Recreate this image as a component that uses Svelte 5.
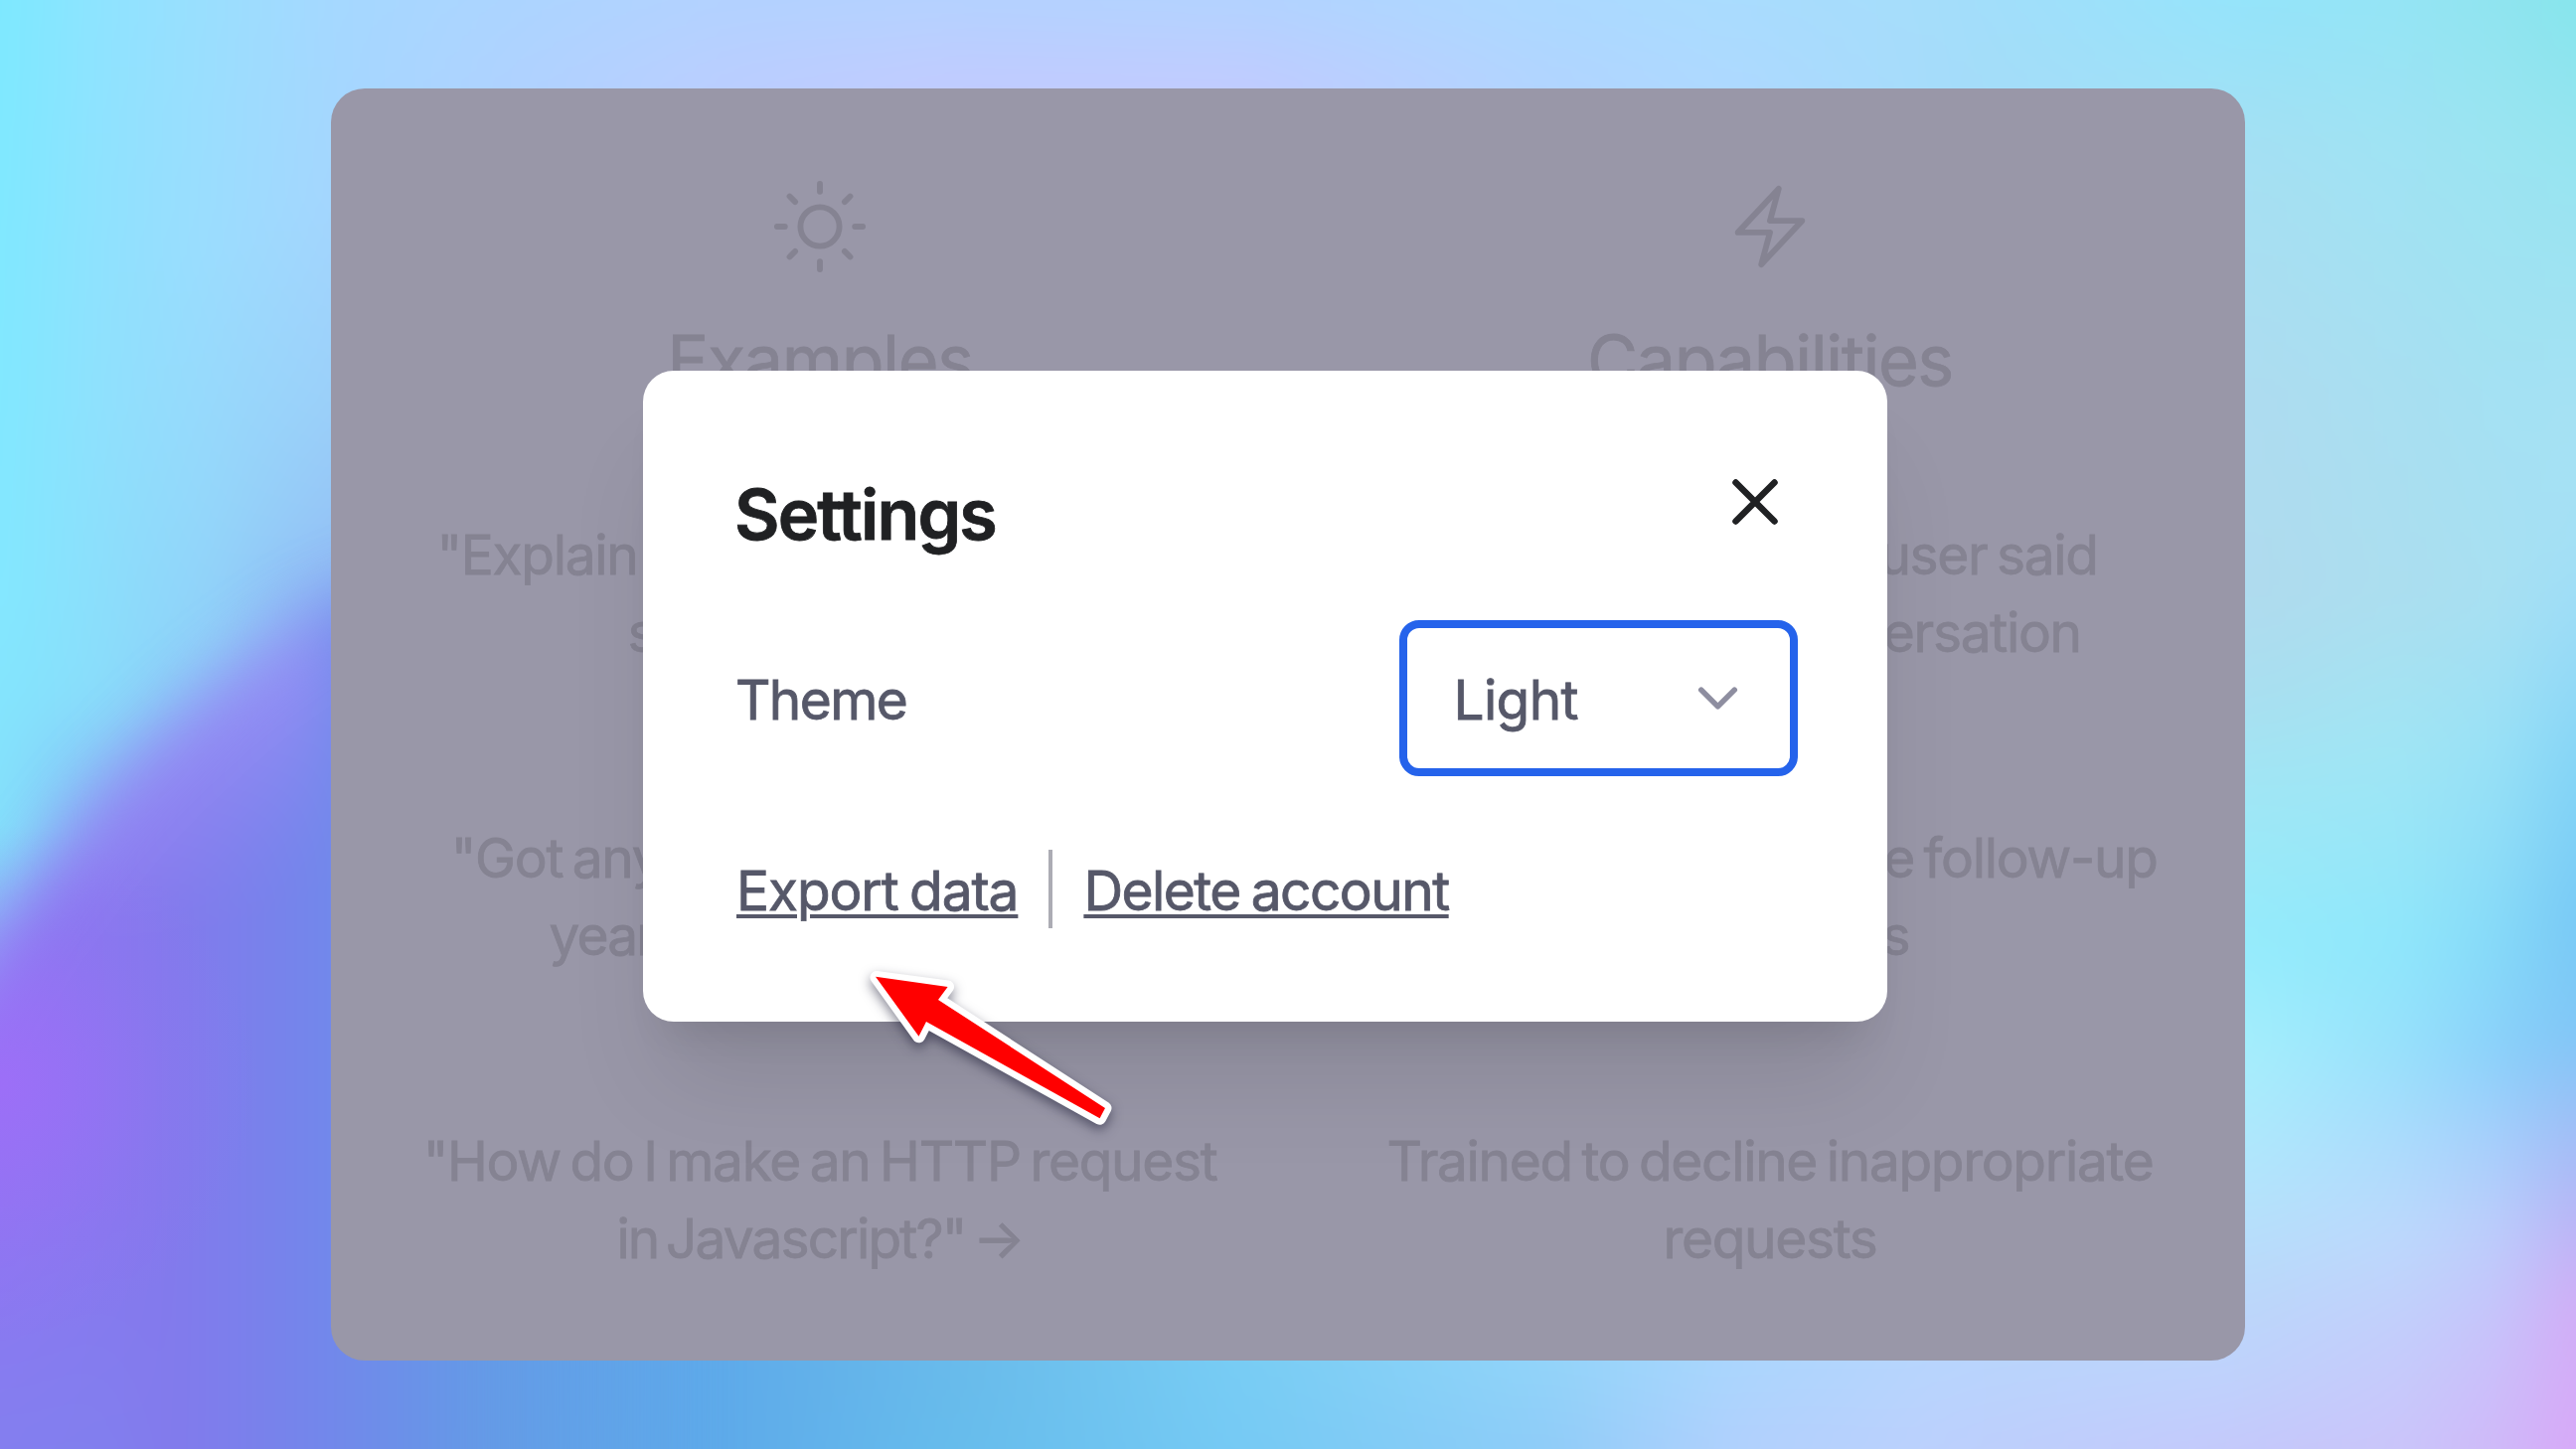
<script>
  // Backdrop colour mesh: one vertical gradient per column, cross-faded to the next column.
  const mesh = [
    { x: 0, stops: [[0, '#7de9ff'], [600, '#83e8ff'], [900, '#84e0fa'], [1458, '#84e0fa']] },
    { x: 110, stops: [[0, '#90e3ff'], [400, '#90e0fd'], [700, '#8adcfa'], [1000, '#8878ee'], [1458, '#8080ee']] },
    { x: 220, stops: [[0, '#9bdefe'], [250, '#9cdcfe'], [500, '#95d6fa'], [650, '#90cef8'], [900, '#8080ee'], [1458, '#7a84ee']] },
    { x: 333, stops: [[0, '#a5d8ff'], [200, '#a4d6fe'], [400, '#9bd0f9'], [530, '#95c4f6'], [800, '#7a84ec'], [1200, '#6f8cea'], [1458, '#6f8ce8']] },
    { x: 480, stops: [[0, '#abd5ff'], [89, '#aed3ff'], [1369, '#649ae6'], [1458, '#649de6']] },
    { x: 720, stops: [[0, '#b2d2ff'], [89, '#bbceff'], [1369, '#5eaaea'], [1458, '#5eaaea']] },
    { x: 950, stops: [[0, '#b4d2ff'], [89, '#c2cbff'], [1369, '#68baea'], [1458, '#66bcec']] },
    { x: 1250, stops: [[0, '#b2d3ff'], [89, '#c2cbff'], [1369, '#78cdf4'], [1458, '#76caf4']] },
    { x: 1550, stops: [[0, '#acd9ff'], [89, '#b2d4ff'], [1369, '#92d4f9'], [1458, '#8eccf8']] },
    { x: 1750, stops: [[0, '#a9dcfe'], [89, '#aed9ff'], [1369, '#abd6fd'], [1458, '#b2d0fd']] },
    { x: 1950, stops: [[0, '#a5ddfa'], [89, '#a5dcfa'], [1369, '#b8d5fd'], [1458, '#bcd0fd']] },
    { x: 2259, stops: [[0, '#94e4fb'], [150, '#a5e0f3'], [400, '#aedcf0'], [600, '#b0dbee'], [700, '#a9dff0'], [800, '#a0e7f5'], [950, '#94ecfc'], [1060, '#a6effc'], [1180, '#b2e6fc'], [1300, '#bbd8fa'], [1400, '#c0d0fc'], [1458, '#c5c8fb']] },
    { x: 2425, stops: [[0, '#94e4f4'], [150, '#9fe3f3'], [400, '#a8dff1'], [600, '#abdeef'], [750, '#a0e5f4'], [950, '#8ee6fb'], [1060, '#97dffb'], [1150, '#abdafc'], [1240, '#bcd8fc'], [1350, '#c4ccfb'], [1458, '#cbc4fa']] },
    { x: 2520, stops: [[0, '#8fe4ef'], [150, '#9be4f1'], [400, '#a4e1f3'], [600, '#a8e0f2'], [750, '#98e0f6'], [950, '#84d8f8'], [1060, '#8acffa'], [1150, '#a6cdfb'], [1240, '#bccbfb'], [1350, '#c9c0fa'], [1458, '#d0b8f9']] },
    { x: 2592, stops: [[0, '#86e5ec'], [150, '#96e4f0'], [400, '#a5e1f3'], [540, '#a4e0f5'], [620, '#9cdcf7'], [780, '#82d3f6'], [920, '#78c9f5'], [1040, '#80c6f6'], [1120, '#9bbff6'], [1220, '#b7b5f6'], [1310, '#d1adf6'], [1458, '#d8a8f8']] }
  ];

  const examples = [
    ['"Explain quantum computing in', 'simple terms" →'],
    ['"Got any creative ideas for a 10', "year old's birthday?\" →"],
    ['"How do I make an HTTP request', 'in Javascript?" →']
  ];
  const capabilities = [
    ['Remembers what user said', 'earlier in the conversation'],
    ['Allows user to provide follow-up', 'corrections'],
    ['Trained to decline inappropriate', 'requests']
  ];
</script>

<div class="stage">
  <svg class="backdrop" viewBox="0 0 2592 1458" aria-hidden="true">
    <defs>
      {#each mesh as col, i}
        <linearGradient id="col{i}" gradientUnits="userSpaceOnUse" x1="0" y1="0" x2="0" y2="1458">
          {#each col.stops as [y, c]}
            <stop offset={y / 1458} stop-color={c} />
          {/each}
        </linearGradient>
        {#if i > 0}
          <linearGradient id="fade{i}" gradientUnits="userSpaceOnUse" x1={mesh[i - 1].x} y1="0" x2={col.x} y2="0">
            <stop offset="0" stop-color="#fff" stop-opacity="0" />
            <stop offset="1" stop-color="#fff" />
          </linearGradient>
          <mask id="mask{i}" maskUnits="userSpaceOnUse" x="-150" y="-150" width="2892" height="1758">
            <rect x="-150" y="-150" width="2892" height="1758" fill="url(#fade{i})" />
          </mask>
        {/if}
      {/each}
      <linearGradient id="violet" gradientUnits="userSpaceOnUse" x1="0" y1="0" x2="700" y2="0">
        <stop offset="0" stop-color="#8f75f2" />
        <stop offset=".24" stop-color="#8379ec" />
        <stop offset=".47" stop-color="#7287eb" />
        <stop offset=".69" stop-color="#649ae6" />
        <stop offset="1" stop-color="#5eaaea" stop-opacity="0" />
      </linearGradient>
      <radialGradient id="magenta" gradientUnits="userSpaceOnUse" cx="0" cy="1090" r="260">
        <stop offset="0" stop-color="#9e6ef8" stop-opacity=".9" />
        <stop offset=".3" stop-color="#9c6ff7" stop-opacity=".6" />
        <stop offset=".65" stop-color="#9872f4" stop-opacity=".2" />
        <stop offset="1" stop-color="#9872f4" stop-opacity="0" />
      </radialGradient>
      <linearGradient id="rim" gradientUnits="userSpaceOnUse" x1="110" y1="760" x2="200" y2="930">
        <stop offset="0" stop-color="#a094f8" stop-opacity=".75" />
        <stop offset="1" stop-color="#9488f4" stop-opacity="0" />
      </linearGradient>
      <linearGradient id="floor" gradientUnits="userSpaceOnUse" x1="0" y1="1220" x2="0" y2="1458">
        <stop offset="0" stop-color="#7f82ee" stop-opacity="0" />
        <stop offset="1" stop-color="#7f82ee" stop-opacity=".75" />
      </linearGradient>
      <filter id="smooth" filterUnits="userSpaceOnUse" x="-150" y="-150" width="2892" height="1758" color-interpolation-filters="sRGB">
        <feGaussianBlur stdDeviation="24" />
      </filter>
      <filter id="soft" filterUnits="userSpaceOnUse" x="-500" y="300" width="1700" height="1700" color-interpolation-filters="sRGB">
        <feGaussianBlur stdDeviation="32" />
      </filter>
    </defs>
    <g filter="url(#smooth)">
      {#each mesh as col, i}
        <rect
          x={i ? mesh[i - 1].x : -150}
          y="-150"
          width={2742 - (i ? mesh[i - 1].x : -150)}
          height="1758"
          fill="url(#col{i})"
          mask={i ? `url(#mask${i})` : undefined}
        />
      {/each}
    </g>
    <g filter="url(#soft)">
      <path d="M-200 1200 L-60 1050 Q0 945 50 872 Q110 785 200 708 Q260 655 333 612 L700 480 V1700 H-200Z" fill="url(#violet)" />
      <path d="M-60 1050 Q0 945 50 872 Q110 785 200 708 Q260 655 333 612 V900 H-60Z" fill="url(#rim)" />
      <rect x="-200" y="1220" width="340" height="500" fill="url(#floor)" />
    </g>
    <circle cx="0" cy="1090" r="260" fill="url(#magenta)" />
  </svg>

  <main class="panel">
    <section class="column">
      <svg class="icon" viewBox="0 0 24 24" aria-hidden="true">
        <circle cx="12" cy="12" r="5" />
        <path d="M12 1v2M12 21v2M4.22 4.22l1.42 1.42M18.36 18.36l1.42 1.42M1 12h2M21 12h2M4.22 19.78l1.42-1.42M18.36 5.64l1.42-1.42" />
      </svg>
      <h2>Examples</h2>
      {#each examples as lines, i}
        <p class:first={i === 0}>{#each lines as line}<span class:arrow={line.endsWith('→')}>{line}</span>{/each}</p>
      {/each}
    </section>
    <section class="column">
      <svg class="icon" viewBox="0 0 24 24" aria-hidden="true">
        <path d="M3.75 13.5l10.5-11.25L12 10.5h8.25L9.75 21.75 12 13.5H3.75z" />
      </svg>
      <h2>Capabilities</h2>
      {#each capabilities as lines}
        <p>{#each lines as line}<span>{line}</span>{/each}</p>
      {/each}
    </section>
  </main>

  <div class="modal" role="dialog" aria-label="Settings">
    <header>
      <h1>Settings</h1>
      <button class="close" aria-label="Close">
        <svg viewBox="0 0 24 24"><path d="M18 6L6 18M6 6l12 12" /></svg>
      </button>
    </header>
    <div class="row">
      <span class="label">Theme</span>
      <button class="select">
        <span>Light</span>
        <svg viewBox="0 0 24 24"><path d="M6 9l6 6 6-6" /></svg>
      </button>
    </div>
    <div class="links">
      <a href="#export">Export data</a>
      <i></i>
      <a href="#delete" class="delete">Delete account</a>
    </div>
  </div>

  <svg class="pointer" viewBox="860 960 280 190" aria-hidden="true">
    <path class="outline" d="M882 983.5L953.6 993L944 1006L1112 1115L1106.6 1125.3L932 1028L924.5 1042.7Z" />
    <path class="fill" d="M881 982.7L953.6 993L944 1006L1112 1115L1106.6 1125.3L932 1028L924.5 1042.7Z" />
  </svg>
</div>

<style>
  :global(body) {
    margin: 0;
    overflow: hidden;
  }
  .stage {
    position: relative;
    box-sizing: border-box;
    width: 2592px;
    height: 1458px;
    padding: 89px 333px;
    overflow: hidden;
    font-family: Inter, 'Liberation Sans', sans-serif;
  }
  .backdrop {
    position: absolute;
    inset: 0;
    width: 100%;
    height: 100%;
  }
  .panel {
    position: relative;
    box-sizing: border-box;
    display: grid;
    grid-template-columns: 1fr 1fr;
    column-gap: 78px;
    height: 1280px;
    padding: 91.5px 39px 0 53px;
    border-radius: 34px;
    background: #9997a8;
    color: #858392;
  }
  .column {
    display: flex;
    flex-direction: column;
    align-items: center;
  }
  .icon {
    width: 94px;
    height: 94px;
    fill: none;
    stroke: currentColor;
    stroke-width: 1.5;
    stroke-linecap: round;
    stroke-linejoin: round;
  }
  h2 {
    margin: 33px 0 102px;
    font-size: 70px;
    line-height: 109px;
    font-weight: 400;
    letter-spacing: -0.02em;
    -webkit-text-stroke: 0.8px currentColor;
  }
  p {
    display: flex;
    flex-direction: column;
    align-items: center;
    margin: 0 0 149px;
    font-size: 55px;
    line-height: 78.15px;
    letter-spacing: -0.024em;
    word-spacing: -4.5px;
    white-space: nowrap;
    -webkit-text-stroke: 0.8px currentColor;
  }
  .first {
    word-spacing: 0;
  }
  .arrow {
    letter-spacing: -0.034em;
    word-spacing: -6px;
  }
  .modal {
    position: absolute;
    left: 647px;
    top: 372.5px;
    box-sizing: border-box;
    width: 1252px;
    height: 655px;
    padding: 90px 94px 0;
    border-radius: 31px;
    background: #fff;
    color: #565869;
    box-shadow: 0 78px 98px -20px rgba(0, 0, 0, 0.1), 0 31px 39px -23px rgba(0, 0, 0, 0.1);
    font-size: 55px;
    letter-spacing: -0.02em;
    word-spacing: -3px;
    -webkit-text-stroke: 0.8px currentColor;
  }
  header {
    display: flex;
    justify-content: space-between;
    align-items: flex-start;
    height: 109px;
  }
  h1 {
    margin: 0 0 0 -2px;
    font-size: 70px;
    line-height: 109px;
    font-weight: 600;
    letter-spacing: -0.026em;
    color: #202123;
  }
  button {
    padding: 0;
    border: 0;
    background: none;
    font: inherit;
    letter-spacing: inherit;
    color: inherit;
  }
  .close {
    display: flex;
    margin-top: 3.5px;
    color: #202123;
  }
  button svg {
    fill: none;
    stroke: currentColor;
    stroke-width: 2;
    stroke-linecap: round;
    stroke-linejoin: round;
  }
  .close svg {
    width: 78px;
    height: 78px;
  }
  .row {
    display: flex;
    justify-content: space-between;
    align-items: center;
    margin: 52px -4px 0 0;
  }
  .label {
    margin-left: -1px;
    padding-top: 3px;
    letter-spacing: -0.03em;
  }
  .select {
    box-sizing: border-box;
    display: flex;
    align-items: center;
    justify-content: space-between;
    width: 401px;
    height: 157px;
    padding: 0 39px 0 46.5px;
    border: 8px solid #2563eb;
    border-radius: 20px;
  }
  .select span {
    padding-top: 3px;
    letter-spacing: -0.012em;
  }
  .select svg {
    width: 67px;
    height: 67px;
    color: #8e8ea0;
  }
  .links {
    display: flex;
    align-items: center;
    height: 79px;
    margin-top: 74px;
    line-height: 78px;
  }
  .links a {
    padding-top: 3px;
    color: inherit;
    text-decoration: underline;
    text-decoration-thickness: 4px;
    text-underline-offset: 4px;
  }
  .links .delete {
    letter-spacing: -0.028em;
  }
  .links i {
    width: 4px;
    height: 79px;
    margin: 0 31px;
    background: #acacb4;
  }
  .pointer {
    position: absolute;
    left: 860px;
    top: 960px;
    width: 280px;
    height: 190px;
    overflow: visible;
    filter: drop-shadow(0 5px 6px rgba(20, 20, 45, 0.5));
  }
  .outline {
    fill: #fff;
    stroke: #fff;
    stroke-width: 13px;
    stroke-linejoin: round;
  }
  .fill {
    fill: #f00;
  }
</style>
